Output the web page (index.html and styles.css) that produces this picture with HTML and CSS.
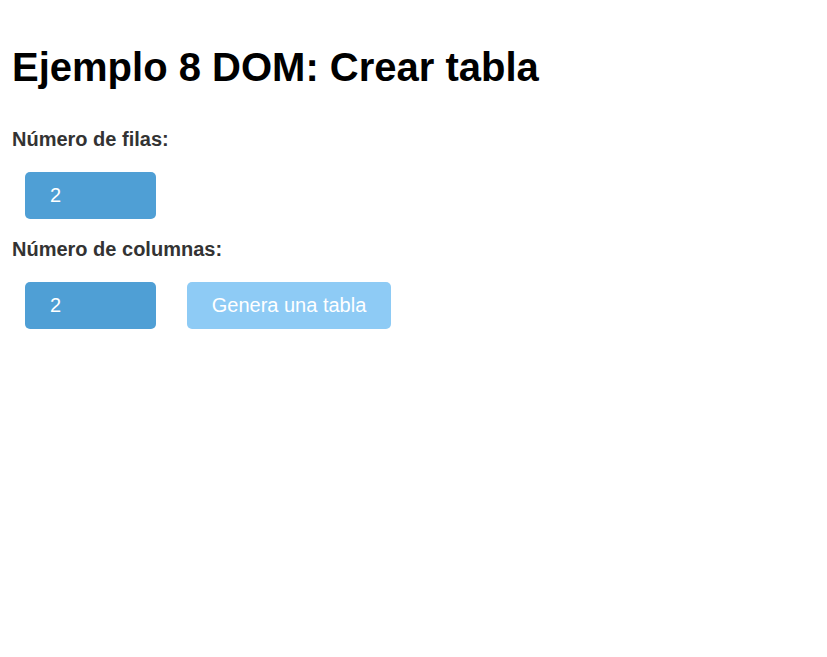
FILE: index.html
```html
<!DOCTYPE html>
<html lang="es">
<head>
<meta charset="utf-8">
<title>Ejemplo 8 DOM</title>
<link rel="stylesheet" href="styles.css">
</head>
<body>
<h1 class="title">Ejemplo 8 DOM: Crear tabla</h1>
<label class="label" for="filas">Número de filas:</label>
<div class="row">
  <input class="num" id="filas" type="text" value="2">
</div>
<label class="label" for="columnas">Número de columnas:</label>
<div class="row">
  <input class="num" id="columnas" type="text" value="2">
  <button class="btn" type="button">Genera una tabla</button>
</div>
</body>
</html>
```
FILE: styles.css
```css
html, body {
  margin: 0;
  padding: 0;
  background: #ffffff;
}
body {
  padding: 0 12px;
  font-family: "Liberation Sans", Arial, sans-serif;
  font-size: 20px;
}
.title {
  font-size: 40px;
  font-weight: bold;
  color: #000;
  margin: 44px 0 38px;
  line-height: 46px;
}
.label {
  display: block;
  font-weight: bold;
  color: #333333;
  line-height: 23px;
  margin: 0 0 21px;
}
.row {
  display: flex;
  gap: 31px;
  padding-left: 13px;
  margin-bottom: 19px;
}
.num {
  box-sizing: border-box;
  width: 131px;
  height: 47px;
  border: none;
  border-radius: 5px;
  background: #4f9fd5;
  color: #ffffff;
  font-family: "Liberation Sans", Arial, sans-serif;
  font-size: 20px;
  padding: 0 0 0 25px;
  outline: none;
}
.btn {
  box-sizing: border-box;
  width: 204px;
  height: 47px;
  border: none;
  border-radius: 5px;
  background: #8ecbf5;
  color: #ffffff;
  font-family: "Liberation Sans", Arial, sans-serif;
  font-size: 20px;
  padding: 0;
}
```
